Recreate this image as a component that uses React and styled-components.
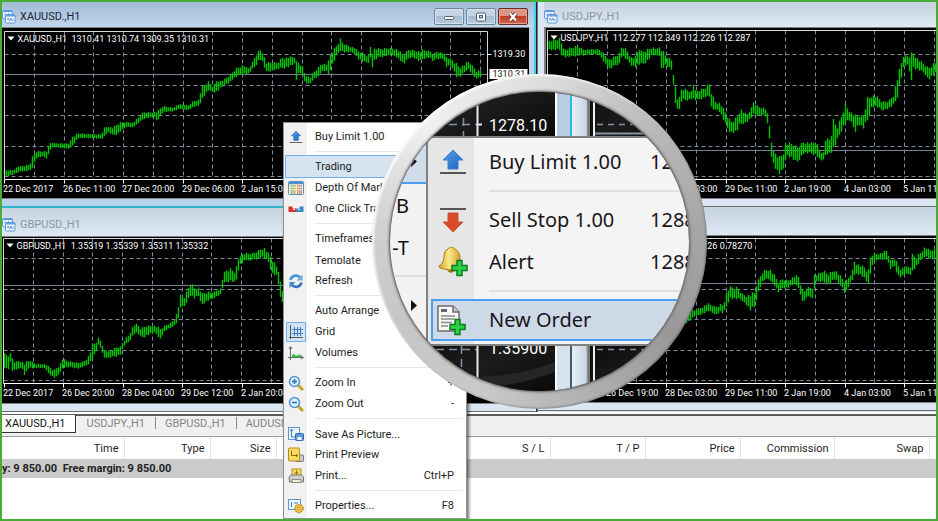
import React from "react";
import styled, { createGlobalStyle, css } from "styled-components";

const GlobalStyle = createGlobalStyle`
  * { box-sizing: border-box; }
  body { margin: 0; background: #fff; }
  body, button, table { font-family: Roboto, "Noto Sans", sans-serif; font-size: 11px; }
  button { border: 0; margin: 0; padding: 0; background: none; text-align: left; }
`;

const Frame = styled.div`
  position: relative;
  display: flex;
  flex-direction: column;
  min-height: 100vh;
  border: 2px solid #4aab35;
  background: #fff;
  overflow: hidden;
`;

/* ---------- chart windows ---------- */

const Workspace = styled.main`
  display: grid;
  grid-template-columns: 535fr 399fr;
`;

const Column = styled.div`
  display: flex;
  flex-direction: column;
  min-width: 0;
  background: ${(p) => (p.$active ? "#b9d1ea" : "#dae6f3")};
  ${(p) =>
    p.$side === "right" &&
    css`
      border-left: 1px solid #6d7884;
    `}
`;

const Window = styled.section`
  display: flex;
  flex-direction: column;
  background: ${(p) => (p.$active ? "#b9d1ea" : "#dae6f3")};
  border-bottom: ${(p) => (p.$active ? "2px solid #2fb4cc" : "1px solid #6c6c6c")};
  padding: 0 ${(p) => (p.$side === "left" ? "7px" : "0")} 7px ${(p) => (p.$side === "left" ? "0" : "6px")};
  ${(p) =>
    p.$side === "left" &&
    css`
      border-right: 1px solid #222;
      box-shadow: inset -2px 0 0 ${p.$active ? "#3fd0ea" : "#e9f1fa"};
    `}
`;

const TitleBar = styled.header`
  display: flex;
  align-items: center;
  gap: 4px;
  height: ${(p) => (p.$tall ? 28 : 25)}px;
  margin-right: ${(p) => (p.$side === "left" ? "-7px" : "0")};
  padding: ${(p) => (p.$tall ? "6px 8px 0 0" : "4px 8px 0 0")};
  background: ${(p) =>
    p.$active ? "linear-gradient(#a3bad4, #c0d6ee)" : "linear-gradient(#c6d2df, #dce8f4)"};
  box-shadow: ${(p) => (p.$active ? "inset -2px 0 0 #3fd0ea" : "none")};
`;

const Title = styled.h2`
  flex: 1;
  margin: 0;
  font-size: 11px;
  font-weight: 400;
  line-height: 16px;
  color: ${(p) => (p.$active ? "#1c2430" : "#8b96a3")};
`;

const Controls = styled.div`
  display: flex;
  gap: 2px;
`;

const ControlButton = styled.button`
  display: flex;
  align-items: center;
  justify-content: center;
  width: 30px;
  height: 17px;
  border: 1px solid ${(p) => (p.$close ? "#6b2a22" : "#6f8296")};
  border-radius: 2px;
  box-shadow: inset 0 0 0 1px ${(p) => (p.$close ? "#e6a193" : "#d5e2f0")};
  background: ${(p) =>
    p.$close
      ? "linear-gradient(#dd9585 45%, #bd3c25 50%, #d2634a)"
      : "linear-gradient(#c4d4e5 45%, #a6bbd1 50%, #b7cbe0)"};
`;

const ChartSvg = styled.svg`
  display: block;
  width: 100%;
  height: ${(p) => p.$height}px;
  border-top: 1px solid #808080;
  border-bottom: 1px solid #808080;
  border-left: ${(p) => (p.$bevel ? "2px solid #808080" : "0")};
  background: #000;
  overflow: hidden;
`;

const AxisText = styled.text`
  font-family: Roboto, sans-serif;
  font-size: 9px;
  fill: ${(p) => p.$fill || "#fff"};
  white-space: pre;
`;

const ChartIcon = () => (
  <svg width="14" height="14" viewBox="0 0 14 14" aria-hidden="true">
    <rect x="0.5" y="0.5" width="10" height="8" rx="1" fill="#e9f3ff" stroke="#5e97dd" />
    <path d="M1 1.5h9" stroke="#5e97dd" />
    <path d="M2 5l1.500-1 1.500 1 2-1.500" stroke="#5e97dd" fill="none" />
    <rect x="3.500" y="4.500" width="9.500" height="8.500" rx="1" fill="#f4f9ff" stroke="#5e97dd" />
    <path d="M4 5.800h9" stroke="#5e97dd" strokeWidth="1.400" />
    <path d="M5 10l1.300-2 1.300 3 1.400-3 1.300 3 1.200-2" stroke="#5e97dd" fill="none" />
  </svg>
);

/* Each row of a series holds x, high, low in thirds of a pixel. */
const shift = (dx, values) => values.map((v, i) => (i % 3 === 0 ? v + dx : v));

const XAU = [
  14,510,520,20,512,527,40,512,522,60,498,512,75,500,512,90,495,510,100,465,500,108,455,475,118,455,470,
  130,455,468,143,455,475,148,430,455,155,430,440,175,432,440,210,432,445,216,410,440,222,410,430,235,402,412,
  250,402,412,280,405,412,305,405,415,312,385,410,325,380,395,340,385,405,355,370,400,370,368,385,385,368,378,
  400,370,380,420,350,365,430,338,355,440,338,352,465,338,350,472,335,365,478,330,350,490,320,335,520,325,332,
  535,315,325,565,318,328,580,305,320,598,300,315,605,262,300,625,245,270,640,262,275,650,240,275,665,245,260,
  690,228,245,700,215,235,710,205,230,730,195,220,745,208,220,755,195,210,765,170,200,780,148,175,790,155,190,
  798,190,215,820,188,210,835,190,205,
  ...shift(840, [
    5,172,205,25,172,200,45,172,190,50,185,242,55,185,215,68,200,225,75,220,248,90,235,252,100,220,235,
    115,205,230,125,190,215,140,195,210,145,170,230,155,160,200,165,145,180,175,130,160,182,118,150,190,130,155,
    215,142,155,225,145,160,235,155,175,250,160,185,265,170,188,272,138,175,278,150,200,285,145,180,300,148,170,
    330,145,165,350,148,168,372,165,192,385,150,175,400,150,170,420,155,185,430,150,175,450,155,170,460,165,185,
    470,155,175,490,160,175,500,170,200,515,180,195,530,190,230,540,200,232,555,195,215,565,185,205,580,200,225,
    592,215,240,600,210,225,607,220,230,
  ]),
];

const JPY = [
  52,125,148,70,120,150,88,115,150,95,130,165,105,150,170,120,145,170,145,138,165,160,150,165,190,150,160,
  210,150,165,225,165,190,240,180,208,255,170,195,270,160,190,275,138,165,290,150,180,305,175,195,320,170,200,
  325,135,195,335,155,195,350,148,185,365,142,165,385,150,165,390,138,165,393,140,212,405,165,195,425,180,210,
  430,220,250,435,250,315,440,290,310,445,305,345,455,265,300,470,270,300,485,275,295,488,245,300,500,275,300,
  525,265,290,538,250,290,545,275,335,555,305,325,570,310,335,585,335,370,595,355,390,605,365,398,620,350,395,
  630,325,375,650,345,365,662,330,355,670,305,345,685,320,345,705,325,345,715,350,385,722,410,460,730,455,490,
  740,460,515,750,470,525,760,450,510,768,430,465,785,430,475,800,440,490,820,425,460,845,430,460,858,425,465,
  870,455,480,883,460,480,888,390,460,900,425,460,910,360,455,922,380,420,935,345,390,945,310,370,960,335,360,
  975,345,395,985,350,370,1000,345,385,1012,290,365,1025,285,320,1040,290,320,1055,305,330,1075,305,325,
  1090,285,315,1100,240,300,1112,195,240,1120,165,205,1130,170,190,1145,155,240,1150,155,205,1165,180,210,
  1185,195,220,1195,205,240,1210,190,225,1222,185,215,
];

const GBP = [
  12,450,490,22,450,500,30,450,475,35,460,500,45,475,500,55,470,490,70,478,495,73,478,528,78,475,500,90,470,490,
  105,482,490,135,482,490,145,490,508,160,500,520,170,490,520,180,480,500,190,455,490,195,470,490,210,475,488,
  235,478,492,255,470,485,268,450,475,278,415,460,285,420,450,295,402,420,303,415,435,312,440,460,330,440,460,
  350,430,455,360,430,450,370,412,425,385,395,412,400,362,390,410,362,385,422,375,400,437,365,395,460,365,385,
  470,370,390,480,375,405,492,368,380,510,358,370,525,345,360,535,300,345,540,275,310,550,285,310,560,260,290,
  573,230,270,578,250,285,595,252,275,605,270,302,620,265,290,640,265,280,660,255,270,668,215,245,675,200,235,
  690,195,230,705,205,235,712,165,215,720,152,180,735,150,165,745,150,170,760,148,165,790,130,160,805,150,175,
  815,165,210,830,190,215,837,200,260,842,255,305,848,260,290,
];

const AUD = [
  80,355,370,95,335,360,105,335,350,125,325,345,145,315,335,170,325,345,185,315,335,190,320,345,200,280,325,
  210,265,295,220,265,300,232,265,300,245,285,300,262,290,320,272,285,335,285,280,325,290,255,300,300,235,265,
  310,215,245,330,210,240,345,230,260,355,250,280,370,240,265,385,245,265,400,235,255,415,230,260,425,265,300,
  432,280,310,440,265,295,458,265,295,462,225,280,470,230,245,490,215,250,505,225,255,525,212,240,545,235,260,
  556,250,285,570,230,255,580,210,240,583,185,225,600,200,225,615,205,240,625,220,255,632,170,230,640,165,185,
  660,165,180,683,155,180,690,185,210,705,180,200,712,190,225,720,210,235,735,205,225,752,205,225,757,165,220,
  770,175,200,795,145,170,810,155,180,825,150,180,
];

const toBars = (series, dx, dy) => {
  const bars = [];
  let i = 0;
  let n = 0;
  for (let x = series[0]; x <= series[series.length - 3]; x += 6) {
    while (i + 3 < series.length - 3 && series[i + 3] < x) i += 3;
    const span = series[i + 3] - series[i];
    const t = Math.min(1, Math.max(0, (x - series[i]) / span));
    const high = series[i + 1] + (series[i + 4] - series[i + 1]) * t;
    const low = series[i + 2] + (series[i + 5] - series[i + 2]) * t;
    const range = Math.max(low - high, 9);
    const a = ((n * 37) % 11) / 11;
    const b = ((n * 53) % 7) / 7;
    bars.push({
      x: Math.floor(x / 3 + dx) + 0.5,
      top: (high + range * 0.3 * a - 3) / 3 + dy,
      bottom: (low - range * 0.25 * b + 3) / 3 + dy,
    });
    n += 1;
  }
  return bars;
};

const range = (count) => Array.from({ length: count }, (_, i) => i);

function Chart({ name, quote, series, offset, height, bevel, left, top, bottom, right, gridX, gridY, price, labels, prices }) {
  const bars = toBars(series, offset[0], offset[1]);
  const end = right || 1200;
  return (
    <ChartSvg $height={height} $bevel={bevel} role="img" aria-label={`${name} chart`}>
      <g stroke="#7c8b9c" strokeWidth="1" strokeDasharray="4 3">
        {range(right ? 16 : 40).map((i) => {
          const x = Math.round(gridX + i * 29.74) + 0.5;
          return <path key={i} d={`M${x} ${top}V${bottom}`} />;
        })}
        {range(5).map((i) => {
          const y = Math.round(gridY + i * 30.6) + 0.5;
          return <path key={i} d={`M${left} ${y}H${end}`} />;
        })}
      </g>
      <path d={`M${left} ${price}H${end}`} stroke="#6f8192" />
      <path d={bars.map((b) => `M${b.x} ${b.top}V${b.bottom}`).join("")} stroke="#00c400" strokeWidth="1.400" />
      <path d={`M${left} ${bottom}V${top}H${end}${right ? `V${bottom}` : ""}`} fill="none" stroke="#d8d8d8" />
      <path d={`M${left} ${bottom}H${end}`} stroke="#fff" />
      {labels.map(([text, x]) => (
        <g key={text}>
          <path d={`M${x + 1.5} ${bottom}v4`} stroke="#fff" />
          <AxisText x={x} y={bottom + 12}>{text}</AxisText>
        </g>
      ))}
      <path d={`M${left + 3} ${top + 5}h7l-3.500 4z`} fill="#fff" />
      <AxisText x={left + 13} y={top + 10}>{`${name} ${quote}`}</AxisText>
      {prices && (
        <g>
          <path d={`M${right} 26.500h4`} stroke="#fff" />
          <AxisText x={right + 5} y="29">1319.30</AxisText>
          <rect x={right + 2} y="41" width="38" height="10" fill="#fff" />
          <AxisText x={right + 5} y="49" $fill="#111">1310.31</AxisText>
        </g>
      )}
    </ChartSvg>
  );
}

function ChartWindow({ side, active, tall, name, children }) {
  return (
    <Window $side={side} $active={active}>
      <TitleBar $side={side} $active={active} $tall={tall}>
        <ChartIcon />
        <Title $active={active}>{name}</Title>
        {active && (
          <Controls>
            <ControlButton aria-label="Minimize">
              <svg width="12" height="10"><rect x="1.500" y="4.500" width="9" height="3" rx="1" fill="#fff" stroke="#555f6b" /></svg>
            </ControlButton>
            <ControlButton aria-label="Restore">
              <svg width="12" height="10">
                <rect x="1.500" y="1" width="9" height="8" rx="1" fill="#fff" stroke="#555f6b" />
                <rect x="4.500" y="3.500" width="3" height="2.500" fill="#b5c7da" stroke="#555f6b" />
              </svg>
            </ControlButton>
            <ControlButton aria-label="Close" $close>
              <svg width="12" height="10">
                <path d="M3 1.500l6 7M9 1.500l-6 7" stroke="#5d3a3a" strokeWidth="4" />
                <path d="M3 1.500l6 7M9 1.500l-6 7" stroke="#fff" strokeWidth="2.200" />
              </svg>
            </ControlButton>
          </Controls>
        )}
      </TitleBar>
      {children}
    </Window>
  );
}

/* ---------- tabs and terminal ---------- */

const TabBar = styled.nav`
  display: flex;
  height: 24px;
  margin-top: 1px;
  border-bottom: 1px solid #9c9c9c;
  background: #f0f0f0;
  box-shadow: inset 0 1px 0 #fff, inset 0 3px 0 #5a5a5a;
  padding-top: 2px;
`;

const Tab = styled.button`
  height: 18px;
  padding: 0 10px 0 9px;
  line-height: 18px;
  color: ${(p) => (p.$active ? "#111" : "#858585")};
  ${(p) =>
    p.$active
      ? css`
          padding: 0 9px 0 3px;
          margin-right: 2px;
          background: #fff;
          border: solid #333;
          border-width: 0 1px 1px 0;
        `
      : css`
          &::after {
            content: "";
            display: inline-block;
            height: 12px;
            margin: 0 -10px -2px 10px;
            border-right: 1px solid #8a8a8a;
          }
        `}
`;

const Terminal = styled.table`
  width: 100%;
  table-layout: fixed;
  border-collapse: collapse;
`;

const Col = styled.col`
  width: ${(p) => p.$width};
`;

const HeadCell = styled.th`
  height: 22px;
  padding: 0 5px 0 0;
  border-right: 1px solid #e3e3e3;
  font-weight: 400;
  text-align: right;
  color: #1e1e1e;
  &:last-child { border-right: 0; padding: 0; }
`;

const BalanceCell = styled.td`
  height: 19px;
  padding: 0;
  background: #cbcbcb;
  font-weight: 700;
  color: #222;
  white-space: pre;
`;

const columns = [
  ["Time", "122px"],
  ["Type", "86px"],
  ["Size", "66px"],
  ["", "179px"],
  ["S / L", "95px"],
  ["T / P", "95px"],
  ["Price", "95px"],
  ["Commission", "94px"],
  ["Swap", "95px"],
  ["", "auto"],
];

/* ---------- context menu ---------- */

const Menu = styled.div`
  position: absolute;
  left: 281px;
  top: 120px;
  width: 184px;
  display: flex;
  flex-direction: column;
  padding: 3px 2px 2px;
  border: 1px solid #8f8f8f;
  background: linear-gradient(90deg, #f1f1f1 23px, #fff 23px);
  box-shadow: 2px 2px 3px rgba(0, 0, 0, 0.55);
`;

const MenuRow = styled.button`
  display: flex;
  align-items: center;
  height: 21px;
  padding-right: 10px;
  color: #1d1d1d;
  ${(p) =>
    p.$selected &&
    css`
      background: #d6e3f1;
      box-shadow: 0 0 0 1px #6fb0ee;
    `}
`;

const IconCell = styled.span`
  display: flex;
  align-items: center;
  justify-content: center;
  width: 20px;
  height: 20px;
  margin-right: 9px;
  ${(p) =>
    p.$checked &&
    css`
      background: #cfe2f6;
      box-shadow: inset 0 0 0 1px #74aee6;
    `}
`;

const MenuLabel = styled.span`
  flex: 1;
  line-height: 14px;
  ${(p) =>
    p.$clipped &&
    css`
      height: 9px;
      line-height: 12px;
      overflow: hidden;
    `}
`;

const Divider = styled.hr`
  width: auto;
  height: 1px;
  margin: 4px 2px 4px 29px;
  border: 0;
  background: #e6e6e6;
`;

const ArrowUp = ({ size = 16 }) => (
  <svg width={size} height={size} viewBox="0 0 28 28" aria-hidden="true">
    <defs>
      <linearGradient id="blueArrow" x1="0" y1="0" x2="1" y2="1">
        <stop offset="0" stopColor="#5aa2ea" />
        <stop offset="1" stopColor="#1c62c0" />
      </linearGradient>
    </defs>
    <path d="M14 2L24 12H19V21H9V12H4z" fill="url(#blueArrow)" stroke="#3f7fd0" />
    <path d="M1 25h26" stroke="#555" strokeWidth="1.800" />
  </svg>
);

const ArrowDown = ({ size }) => (
  <svg width={size} height={size} viewBox="0 0 28 28" aria-hidden="true">
    <path d="M1 3h26" stroke="#555" strokeWidth="1.800" />
    <path d="M14 26L24 16H19V7H9V16H4z" fill="#dd4a2a" stroke="#c9553b" />
  </svg>
);

const Plus = () => (
  <path d="M20 14.500h5v5h5v5h-5v5h-5v-5h-5v-5h5z" fill="#2ccf45" stroke="#0a7d1c" strokeWidth="1.500" />
);

const Bell = () => (
  <svg width="32" height="32" viewBox="0 0 32 32" aria-hidden="true">
    <defs>
      <linearGradient id="gold" x1="0" x2="1">
        <stop offset="0" stopColor="#d9a321" />
        <stop offset="0.400" stopColor="#fbe88a" />
        <stop offset="1" stopColor="#c98c12" />
      </linearGradient>
    </defs>
    <path d="M10 23c1 5 7 5 8 0z" fill="#a87410" />
    <path d="M11 3c1-2 6-2 7 0 4 2 5 6 5 10 0 4 1 6 4 8l-1 2c-7 2-16 1-23-1l-1-2c4-2 4-5 5-9 0-4 1-7 4-8z" fill="url(#gold)" stroke="#a8791a" />
    <Plus />
  </svg>
);

const NewDoc = () => (
  <svg width="32" height="32" viewBox="0 0 32 32" aria-hidden="true">
    <path d="M3 2h15l6 6v19H3z" fill="#f8f8f8" stroke="#6b6b6b" strokeWidth="1.500" strokeLinejoin="round" />
    <path d="M18 2v6h6" fill="#ccc" stroke="#6b6b6b" strokeWidth="1.500" />
    <path d="M6 12h14M6 15h13M6 18.500h11M6 22h7" stroke="#8a8a8a" strokeWidth="1.400" />
    <path d="M6 6.500h6" stroke="#666" strokeWidth="3" />
    <g transform="translate(0 1)"><Plus /></g>
  </svg>
);

const drawings = {
  depth: (
    <>
      <rect x="0.500" y="1.500" width="15" height="13" rx="1" fill="#f8f4df" stroke="#5a8fbd" />
      <path d="M1 3h14" stroke="#4b92d4" strokeWidth="2.500" />
      <path d="M2.500 6h5M2.500 8.500h5M2.500 11h5M2.500 13h5" stroke="#87a944" strokeWidth="1.300" strokeDasharray="1.300 0.600" />
      <path d="M9 6h5M9 8.500h5M9 11h5M9 13h5" stroke="#d0675d" strokeWidth="1.300" strokeDasharray="1.300 0.600" />
    </>
  ),
  oneClick: (
    <>
      <path d="M0.500 5.500h4v2h3.500v3.500H0.500z" fill="#d8322c" />
      <path d="M15.500 5.500h-4v2H8v3.500h7.500z" fill="#3f86c8" />
      <path d="M5 8.500h7" stroke="#f2f2f2" strokeDasharray="2 3" />
    </>
  ),
  refresh: (
    <>
      <path d="M2.500 7A5.500 5.500 0 0 1 12 4.500" stroke="#4a93d6" strokeWidth="2.600" fill="none" />
      <path d="M14.500 1.500v6h-6z" fill="#6aaae2" />
      <path d="M13.500 9.500A5.500 5.500 0 0 1 4 12" stroke="#2f75bb" strokeWidth="2.600" fill="none" />
      <path d="M1.500 15V9h6z" fill="#3f85c8" />
    </>
  ),
  grid: (
    <>
      <path d="M2.500 1v14M1 13.500h14" stroke="#555" />
      <path d="M6.500 3v9M9.500 3v9M12.500 3v9M4 5.500h11M4 9.500h11" stroke="#3f7fc0" />
    </>
  ),
  volumes: (
    <>
      <path d="M2.500 2v13M0 12.500h15" stroke="#666" />
      <path d="M1 4l1.500-2.500L4 4M13 11l2.500 1.500L13 14" fill="none" stroke="#666" />
      <path d="M4 12v-2l2-1 2 2 2-1.500 1 1 2-1.500v3z" fill="#27c53a" />
    </>
  ),
  zoom: (
    <>
      <path d="M10 10l5 5" stroke="#c9a227" strokeWidth="3" />
      <circle cx="6.500" cy="6.500" r="5" fill="#dff0fd" stroke="#4d93d2" strokeWidth="1.500" />
      <path d="M4 6.500h5" stroke="#2d72b8" strokeWidth="1.600" />
    </>
  ),
  save: (
    <>
      <rect x="0.500" y="1.500" width="11" height="12" fill="#eef6ff" stroke="#5b95d0" />
      <path d="M3.500 4v7h5M2 5l1.500-2L5 5" fill="none" stroke="#4a80b6" />
      <rect x="7.500" y="7.500" width="8" height="7" rx="1" fill="#5c99d8" stroke="#2e6cab" />
      <path d="M9.500 12.500h4" stroke="#fff" strokeWidth="3" />
    </>
  ),
  preview: (
    <>
      <rect x="7" y="8" width="8.500" height="6.500" rx="1" fill="#ccc" stroke="#777" />
      <rect x="0.500" y="1" width="11" height="13" rx="1" fill="#f6dc60" stroke="#b18f1c" />
      <path d="M3.500 3.500v5h6M8 7l1.500 1.500L8 10" fill="none" stroke="#8a6d10" />
    </>
  ),
  print: (
    <>
      <rect x="4" y="1" width="9" height="8" fill="#f6dc60" stroke="#b18f1c" />
      <path d="M8.500 2.500v4M6.500 5h4" stroke="#8a6d10" />
      <path d="M1 9l2-2h10.500l2 2v5h-14z" fill="#d0d0d0" stroke="#777" />
      <path d="M4 11.500h9v3H4z" fill="#f3ead0" stroke="#888" />
    </>
  ),
  properties: (
    <>
      <rect x="0.500" y="1.500" width="12" height="10" fill="#eef6ff" stroke="#5b95d0" />
      <path d="M3.500 4v5M6 5h4" stroke="#4a80b6" />
      <circle cx="11" cy="10.500" r="4" fill="#f1c845" stroke="#b98c1c" strokeDasharray="2 0.800" strokeWidth="1.400" />
      <circle cx="11" cy="10.500" r="1.300" fill="#fff" stroke="#b98c1c" />
    </>
  ),
};

const SmallIcon = ({ kind }) => {
  if (!kind) return null;
  if (kind === "up") return <ArrowUp size={14} />;
  return (
    <svg width="16" height="16" viewBox="0 0 16 16" aria-hidden="true">
      {kind === "zoomIn" || kind === "zoomOut" ? drawings.zoom : drawings[kind]}
      {kind === "zoomIn" && <path d="M6.500 4v5" stroke="#2d72b8" strokeWidth="1.600" />}
    </svg>
  );
};

const menuGroups = [
  [["Buy Limit 1.00", "up"]],
  [["Trading", null, { selected: true }], ["Depth Of Market", "depth"], ["One Click Trading", "oneClick"]],
  [["Timeframes"], ["Template", null, { clipped: true }], ["Refresh", "refresh"]],
  [["Auto Arrange"], ["Grid", "grid", { checked: true }], ["Volumes", "volumes"]],
  [["Zoom In", "zoomIn", { hint: "+" }], ["Zoom Out", "zoomOut", { hint: "-" }]],
  [["Save As Picture...", "save", { clipped: true }], ["Print Preview", "preview"], ["Print...", "print", { hint: "Ctrl+P" }]],
  [["Properties...", "properties", { hint: "F8" }]],
];

/* ---------- magnifier ---------- */

const Lens = styled.div`
  position: absolute;
  left: 370px;
  top: 72px;
  width: 335px;
  height: 335px;
  padding: 18px;
  border-radius: 50%;
  background: conic-gradient(
    #dedede, #b9b9b9 45deg, #a4a4a4 90deg, #999 125deg, #b2b2b2 165deg, #c9c9c9 200deg,
    #c6c6c6 240deg, #d0d0d0 275deg, #f0f0f0 315deg, #dedede
  );
  box-shadow: inset 2px 2px 2px rgba(255, 255, 255, 0.8), inset -1px -1px 2px rgba(0, 0, 0, 0.25);
`;

const Glass = styled.div`
  display: flex;
  flex-direction: column;
  width: 100%;
  height: 100%;
  border-radius: 50%;
  overflow: hidden;
  background: #141414;
  box-shadow: 0 0 0 1px #777, 0 0 2px 2px rgba(90, 90, 90, 0.5);
`;

const Strip = styled.div`
  display: flex;
  height: ${(p) => (p.$top ? 44 : 45)}px;
`;

const StripChart = styled.svg`
  flex: ${(p) => (p.$fill ? "1 1 0" : "0 0 165px")};
  width: ${(p) => (p.$fill ? "auto" : "165px")};
  min-width: 0;
  height: 100%;
  background: linear-gradient(155deg, #0c0c0c, #1c1c1c 50%, #0a0a0a);
`;

const StripFrame = styled.div`
  width: 38px;
  background: linear-gradient(
    90deg,
    #fff 2px, ${(p) => p.$tint} 2px 15px, ${(p) => p.$edge} 15px 17px, #e6edf5 17px,
    #cbd7e5 31px, #777 33px 35px, #111 35px
  );
`;

const StripText = styled.text`
  font-family: Roboto, sans-serif;
  font-size: 16px;
  fill: #fff;
`;

const Zoomed = styled.div`
  display: flex;
  height: 210px;
`;

const ParentMenu = styled.div`
  display: flex;
  flex-direction: column;
  width: 36px;
  background: #f2f2f2;
`;

const ParentItem = styled.div`
  display: flex;
  align-items: center;
  justify-content: flex-end;
  height: 42px;
  padding-right: ${(p) => (p.$arrow ? "9px" : "17px")};
  font-family: "Noto Sans", sans-serif;
  font-size: 20px;
  color: #111;
  ${(p) =>
    p.$selected &&
    css`
      height: 48px;
      padding: 4px 9px 0 0;
      background: #cfdcea;
      border-bottom: 2px solid #4a9ff0;
    `}
`;

const ZoomDivider = styled.hr`
  height: 2px;
  border: 0;
  margin: ${(p) => (p.$plain ? "7px 0" : "7px 0 7px 58px")};
  background: #dedede;
  align-self: stretch;
`;

const SubMenu = styled.div`
  display: flex;
  flex: 1;
  flex-direction: column;
  min-width: 0;
  padding: 3px 0 2px 3px;
  border: solid #808080;
  border-width: 2px 0 2px 2px;
  background: linear-gradient(90deg, #e6e6e6 46px, #f4f4f4 46px);
`;

const SubRow = styled.button`
  display: flex;
  align-items: center;
  height: 42px;
  font-family: "Noto Sans", sans-serif;
  font-size: 20px;
  line-height: 28px;
  white-space: nowrap;
  color: #1a1420;
  ${(p) =>
    p.$selected &&
    css`
      background: #cdd9e7;
      box-shadow: inset 0 0 0 2px #4a9ff0;
    `}
`;

const SubIcon = styled.span`
  display: flex;
  flex: none;
  justify-content: center;
  width: 44px;
  margin-right: 14px;
  padding-right: ${(p) => (p.$selected ? "5px" : "0")};
`;

const SubLabel = styled.span`
  flex: none;
  width: 161px;
`;

const Pointer = () => (
  <svg width="6" height="11" aria-hidden="true"><path d="M0 0l6 5.500-6 5.500z" fill="#111" /></svg>
);

const subGroups = [
  [["Buy Limit 1.00", <ArrowUp key="i" size={28} />, "1278.10"]],
  [["Sell Stop 1.00", <ArrowDown key="i" size={28} />, "1288.10"], ["Alert", <Bell key="i" />, "1288.10"]],
  [["New Order", <NewDoc key="i" />, "", true]],
];

function Magnifier() {
  return (
    <Lens>
      <Glass>
        <Strip $top>
          <StripChart>
            <path d="M73.500 0V44M20 32.500H87" stroke="#8494a6" strokeWidth="1.500" strokeDasharray="8 5" />
            <path d="M87.500 0V44M87 32.500h5" stroke="#e8e8e8" strokeWidth="2" />
            <StripText x="99" y="39">1278.10</StripText>
          </StripChart>
          <StripFrame $tint="#b7cde6" $edge="#23bfe0" />
          <StripChart $fill>
            <path d="M1 0V44" stroke="#f0f0f0" strokeWidth="2" />
            <path d="M4 32.500H100" stroke="#8494a6" strokeWidth="1.500" strokeDasharray="6 5" />
            <path d="M2 41.500H100" stroke="#8494a6" strokeWidth="2" />
          </StripChart>
        </Strip>
        <Zoomed>
          <ParentMenu>
            <ParentItem $selected><Pointer /></ParentItem>
            <ParentItem>B</ParentItem>
            <ParentItem>-T</ParentItem>
            <ZoomDivider $plain />
            <ParentItem $arrow><Pointer /></ParentItem>
          </ParentMenu>
          <SubMenu role="menu">
            {subGroups.map((group, g) => (
              <React.Fragment key={g}>
                {g > 0 && <ZoomDivider />}
                {group.map(([label, icon, price, selected]) => (
                  <SubRow key={label} role="menuitem" $selected={selected}>
                    <SubIcon $selected={selected}>{icon}</SubIcon>
                    <SubLabel>{label}</SubLabel>
                    <span>{price}</span>
                  </SubRow>
                ))}
              </React.Fragment>
            ))}
          </SubMenu>
        </Zoomed>
        <Strip>
          <StripChart>
            <path d="M0 18Q90 45 165 16V26Q90 55 0 28z" fill="#262626" />
            <path d="M71.500 0V44M20 3.500H87" stroke="#8494a6" strokeWidth="1.500" strokeDasharray="8 5" />
            <path d="M87.500 0V44" stroke="#e8e8e8" strokeWidth="2" />
            <StripText x="99" y="8">1.35900</StripText>
          </StripChart>
          <StripFrame $tint="#d5e2f0" $edge="#4c5864" />
          <StripChart $fill>
            <path d="M1 0V44" stroke="#f0f0f0" strokeWidth="2" />
            <path d="M4 3.500H100" stroke="#8494a6" strokeWidth="1.500" strokeDasharray="6 5" />
          </StripChart>
        </Strip>
      </Glass>
    </Lens>
  );
}

const tabs = ["XAUUSD.,H1", "USDJPY.,H1", "GBPUSD.,H1", "AUDUSD.,H1"];

export default function App() {
  return (
    <Frame>
      <GlobalStyle />
      <Workspace>
        <Column $active>
          <ChartWindow side="left" active name="XAUUSD.,H1">
            <Chart
              name="XAUUSD.,H1" quote=" 1310.41 1310.74 1309.35 1310.31"
              series={XAU} offset={[-2, -28]} height={172}
              left={2.5} top={3.5} bottom={151.5} right={485.5}
              gridX={32} gridY={26} price={46.5} prices
              labels={[["22 Dec 2017", 1], ["26 Dec 11:00", 61], ["27 Dec 20:00", 120], ["29 Dec 06:00", 180], ["2 Jan 15:00", 239], ["4 Jan 00:00", 299]]}
            />
          </ChartWindow>
          <ChartWindow side="left" tall name="GBPUSD.,H1">
            <Chart
              name="GBPUSD.,H1" quote=" 1.35319 1.35339 1.35311 1.35332"
              series={GBP} offset={[-2, -33]} height={168}
              left={1.5} top={1.5} bottom={146.5} right={485.5}
              gridX={31} gridY={21} price={48.5}
              labels={[["22 Dec 2017", 1], ["26 Dec 20:00", 60], ["28 Dec 04:00", 120], ["29 Dec 12:00", 179], ["2 Jan 20:00", 239]]}
            />
          </ChartWindow>
        </Column>
        <Column $side="right">
          <ChartWindow side="right" name="USDJPY.,H1">
            <Chart
              name="USDJPY.,H1" quote=" 112.277 112.349 112.226 112.287"
              series={JPY} offset={[-16, -28]} height={172} bevel
              left={1.5} top={2.5} bottom={151.5}
              gridX={31} gridY={26} price={122.5}
              labels={[["28 Dec 03:00", 119], ["29 Dec 11:00", 179], ["2 Jan 19:00", 238], ["4 Jan 03:00", 298], ["5 Jan 11:00", 357]]}
            />
          </ChartWindow>
          <ChartWindow side="right" tall name="AUDUSD.,H1">
            <Chart
              name="AUDUSD.,H1" quote=" 0.78240 0.78282 0.78226 0.78270"
              series={AUD} offset={[114, -37]} height={168} bevel
              left={1.5} top={2.5} bottom={147.5}
              gridX={31} gridY={22} price={47.5}
              labels={[["26 Dec 19:00", 60], ["28 Dec 03:00", 119], ["29 Dec 11:00", 179], ["2 Jan 19:00", 238], ["4 Jan 03:00", 298], ["5 Jan 11:00", 357]]}
            />
          </ChartWindow>
        </Column>
      </Workspace>

      <TabBar>
        {tabs.map((tab, i) => (
          <Tab key={tab} $active={i === 0}>{tab}</Tab>
        ))}
      </TabBar>

      <Terminal>
        <colgroup>
          {columns.map(([, width], i) => <Col key={i} $width={width} />)}
        </colgroup>
        <thead>
          <tr>{columns.map(([label], i) => <HeadCell key={i}>{label}</HeadCell>)}</tr>
        </thead>
        <tbody>
          <tr><BalanceCell colSpan={columns.length}>{"y: 9 850.00  Free margin: 9 850.00"}</BalanceCell></tr>
        </tbody>
      </Terminal>

      <Menu role="menu">
        {menuGroups.map((group, g) => (
          <React.Fragment key={g}>
            {g > 0 && <Divider />}
            {group.map(([label, icon, opts = {}]) => (
              <MenuRow key={label} role="menuitem" $selected={opts.selected}>
                <IconCell $checked={opts.checked}><SmallIcon kind={icon} /></IconCell>
                <MenuLabel $clipped={opts.clipped}>{label}</MenuLabel>
                {opts.hint && <span>{opts.hint}</span>}
              </MenuRow>
            ))}
          </React.Fragment>
        ))}
      </Menu>

      <Magnifier />
    </Frame>
  );
}
